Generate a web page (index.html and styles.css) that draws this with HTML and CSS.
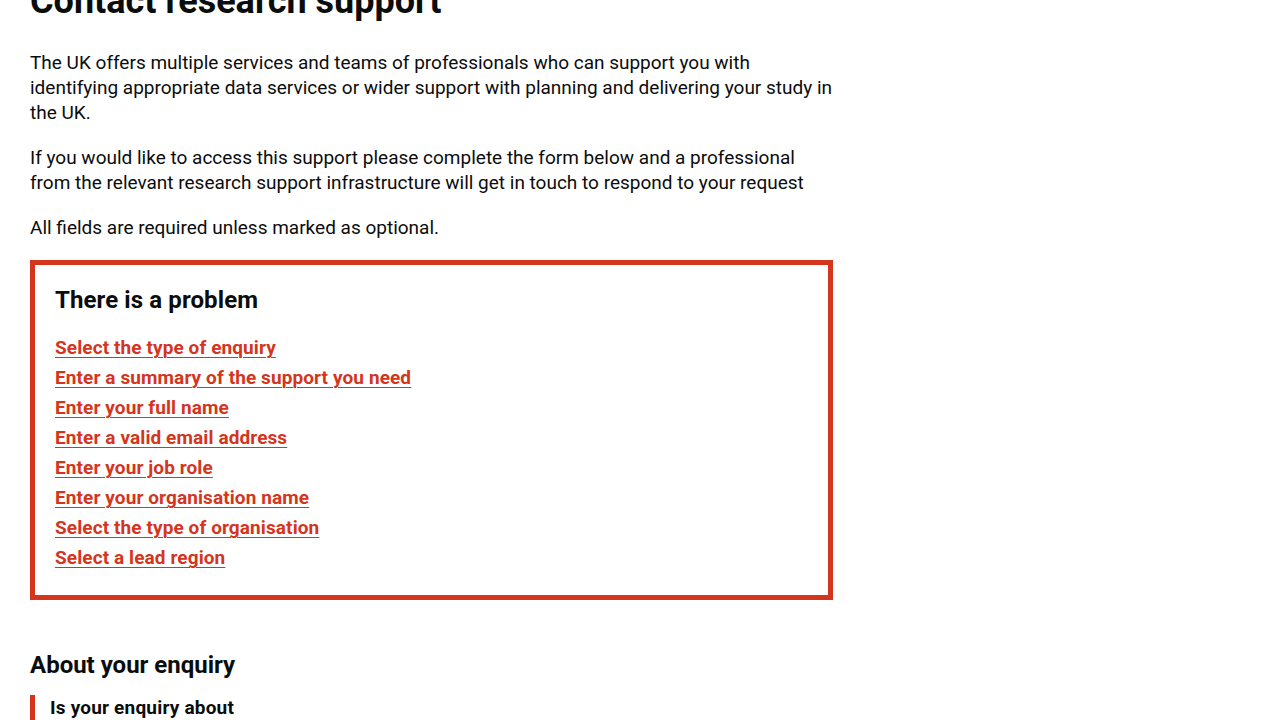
FILE: index.html
```html
<!DOCTYPE html>
<html lang="en">
<head>
    <meta charset="UTF-8">
    <meta name="viewport" content="width=device-width, initial-scale=1.0">
    <title>Contact research support</title>
    <link rel="stylesheet" href="styles.css">
</head>
<body>
    <main class="page">
        <div class="column">
            <h1 class="heading-l">Contact research support</h1>
            <p class="body">The UK offers multiple services and teams of professionals who can support you with identifying appropriate data services or wider support with planning and delivering your study in the UK.</p>
            <p class="body">If you would like to access this support please complete the form below and a professional from the relevant research support infrastructure will get in touch to respond to your request</p>
            <p class="body">All fields are required unless marked as optional.</p>

            <div class="error-summary" role="alert">
                <h2 class="error-summary-title">There is a problem</h2>
                <ul class="error-summary-list">
                    <li><a href="#enquiryType">Select the type of enquiry</a></li>
                    <li><a href="#summary">Enter a summary of the support you need</a></li>
                    <li><a href="#fullName">Enter your full name</a></li>
                    <li><a href="#email">Enter a valid email address</a></li>
                    <li><a href="#jobRole">Enter your job role</a></li>
                    <li><a href="#organisationName">Enter your organisation name</a></li>
                    <li><a href="#organisationType">Select the type of organisation</a></li>
                    <li><a href="#leadRegion">Select a lead region</a></li>
                </ul>
            </div>

            <form id="contactForm">
                <h2 class="heading-m">About your enquiry</h2>
                <div class="form-group form-group-error">
                    <fieldset class="fieldset" id="enquiryType">
                        <legend class="legend">Is your enquiry about</legend>
                        <p class="error-message">Select the type of enquiry</p>
                        <label class="radio"><input type="radio" name="enquiryType" value="data"> Identifying appropriate data services</label>
                        <label class="radio"><input type="radio" name="enquiryType" value="research"> Wider support with planning and delivering your study</label>
                    </fieldset>
                </div>
            </form>
        </div>
    </main>
</body>
</html>
```

FILE: styles.css
```css
body {
    margin: 0;
    font-family: Roboto, "Liberation Sans", Arial, sans-serif;
    color: #0b0c0c;
    background-color: #ffffff;
}
.page {
    padding: 0 30px;
}
.column {
    width: 803px;
}
.heading-l {
    font-size: 36px;
    line-height: 40px;
    font-weight: 700;
    margin: -19px 0 29px;
}
.heading-m {
    font-size: 24px;
    line-height: 30px;
    font-weight: 700;
    margin: 0 0 15px;
}
.body {
    font-size: 19px;
    line-height: 25px;
    margin: 0 0 20px;
}
.error-summary {
    border: 5px solid #d4351c;
    padding: 20px;
    margin-bottom: 50px;
}
.error-summary-title {
    font-size: 24px;
    line-height: 30px;
    font-weight: 700;
    letter-spacing: 0.1px;
    margin: 0 0 20px;
}
.error-summary-list {
    list-style: none;
    margin: 0;
    padding: 0;
}
.error-summary-list li {
    font-size: 19px;
    line-height: 25px;
    font-weight: 700;
    letter-spacing: 0.1px;
    margin-bottom: 5px;
}
.error-summary-list a {
    color: #d4351c;
    text-decoration: underline;
    text-decoration-thickness: 1px;
    text-underline-offset: 0.1578em;
}
.form-group-error {
    border-left: 5px solid #d4351c;
    padding-left: 15px;
}
.fieldset {
    border: 0;
    margin: 0;
    padding: 0;
}
.legend {
    padding: 0;
    font-size: 19px;
    line-height: 25px;
    font-weight: 700;
    letter-spacing: 0.2px;
    margin-bottom: 10px;
}
.error-message {
    color: #d4351c;
    font-size: 19px;
    line-height: 25px;
    font-weight: 700;
    margin: 0 0 15px;
}
.radio {
    display: block;
    font-size: 19px;
    line-height: 25px;
    margin-bottom: 10px;
}
```
